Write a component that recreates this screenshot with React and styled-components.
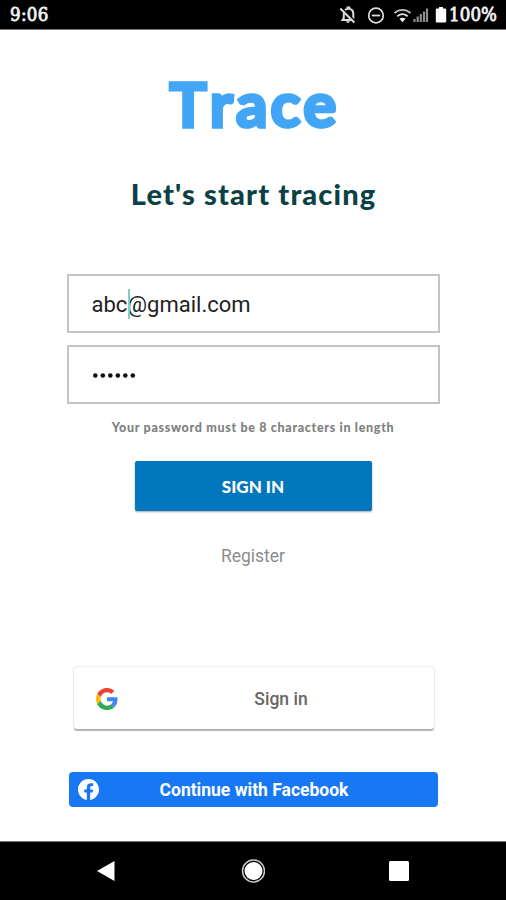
import React, { useState } from 'react';
import styled, { createGlobalStyle } from 'styled-components';

const GlobalStyle = createGlobalStyle`
  * {
    box-sizing: border-box;
  }

  body {
    margin: 0;
    background: #fff;
    font-family: Roboto, sans-serif;
  }
`;

const Screen = styled.div`
  width: 506px;
  height: 900px;
  display: flex;
  flex-direction: column;
  background: #fff;
  overflow: hidden;
`;

const StatusBar = styled.header`
  height: 30px;
  flex-shrink: 0;
  display: flex;
  justify-content: space-between;
  align-items: center;
  padding: 0 9px 0 10px;
  background: #000;
  border-bottom: 1px solid #777;
  color: #f2f2f2;
  font: 18.5px/30px 'DejaVu Serif Condensed', 'DejaVu Serif', serif;
  font-stretch: condensed;
  -webkit-text-stroke: 0.8px #f2f2f2;
`;

const StatusText = styled.span`
  letter-spacing: ${props => props.$spacing || '0'};
`;

const StatusIcons = styled.div`
  display: flex;
  align-items: center;
  height: 30px;

  svg {
    display: block;
  }
`;

const Content = styled.main`
  flex: 1;
  display: flex;
  flex-direction: column;
  align-items: center;
`;

const Logo = styled.h1`
  margin: 35px 0 0;
  color: #42a5f5;
  font: 700 62px/76px Lato, sans-serif;
  font-kerning: none;
  letter-spacing: 3px;
  text-indent: 3px;
  -webkit-text-stroke: 3.5px #42a5f5;
`;

const Tagline = styled.h2`
  margin: 33px 0 0;
  color: #0b4144;
  font: 900 29px/40px Lato, sans-serif;
  letter-spacing: 1.15px;
  text-indent: 1.15px;
`;

const Form = styled.form`
  width: 373px;
  margin-top: 60px;
  display: flex;
  flex-direction: column;
  align-items: center;
`;

const Field = styled.div`
  position: relative;
  width: 100%;
  height: 59px;
  margin-bottom: 12px;
  padding: 2px 24px 0 23px;
  display: flex;
  align-items: center;
  border: 2px solid #c4c4c4;
  color: #222;
  font-size: 22px;
`;

const Caret = styled.span`
  position: absolute;
  left: 59px;
  top: 13px;
  width: 2px;
  height: 30px;
  background: #7fd0c0;
`;

const Dots = styled.svg`
  display: block;
`;

const Hint = styled.p`
  margin: 2px 0 0;
  color: #808080;
  font: 900 12.5px/20px Lato, sans-serif;
  letter-spacing: 0.68px;
  white-space: nowrap;
`;

const SignInButton = styled.button`
  width: 237px;
  height: 50px;
  margin-top: 23px;
  padding: 2px 0 0;
  border: none;
  border-radius: 2px;
  background: #0277bd;
  box-shadow: 0 1px 2px rgba(0, 0, 0, 0.35);
  color: #fff;
  font: 900 17px/48px Lato, sans-serif;
`;

const RegisterLink = styled.a`
  margin-top: 33px;
  color: #8c8c8c;
  font-size: 17.5px;
  line-height: 24px;
`;

const GoogleButton = styled.button`
  width: 360px;
  height: 62px;
  margin: 99px 0 0 2px;
  padding: 2px 0 0 22px;
  display: flex;
  align-items: center;
  border: none;
  border-radius: 3px;
  background: #fff;
  box-shadow: 0 2px 1px rgba(0, 0, 0, 0.28), 0 0 2px rgba(0, 0, 0, 0.22);
  color: #666;
  font: 500 17.5px/24px Roboto, sans-serif;
`;

const GoogleLabel = styled.span`
  flex: 1;
  padding-left: 10px;
  text-align: center;
`;

const FacebookButton = styled.button`
  width: 369px;
  height: 35px;
  margin-top: 43px;
  padding: 0 10px 0 9px;
  display: flex;
  align-items: center;
  border: none;
  border-radius: 4px;
  background: #1877f2;
  color: #fff;
  font: bold 17.5px/24px Roboto, sans-serif;
`;

const FacebookLabel = styled.span`
  flex: 1;
  padding: 1px 18px 0 0;
  text-align: center;
`;

const NavBar = styled.nav`
  height: 59px;
  flex-shrink: 0;
  display: flex;
  justify-content: space-between;
  align-items: center;
  padding: 0 96px 0 95px;
  background: #000;
  border-top: 1px solid #777;
`;

const StatusGlyphs = () => (
  <svg width="111" height="30" viewBox="0 0 111 30" fill="none">
    {/* muted bell */}
    <path d="M4.5 20h10.8V14c0-3-1.8-5-4-5.3V7.5h-1.8v1.2c-2.2.4-3.7 2.4-3.7 5.3v4z" stroke="#ddd" strokeWidth="2" />
    <path d="M8.2 21.3h3.6a1.8 1.8 0 0 1-3.6 0z" fill="#ddd" />
    <path d="M3.5 8.500l14 14" stroke="#000" strokeWidth="3" />
    <path d="M2.3 8.500l14 14" stroke="#ddd" strokeWidth="2" />
    {/* do not disturb */}
    <circle cx="38" cy="15.5" r="7.3" stroke="#ddd" strokeWidth="1.7" />
    <path d="M33.8 15.500h8.400" stroke="#ddd" strokeWidth="1.8" />
    {/* wifi */}
    <path d="M56.5 13c4.700-4.200 11.300-4.200 16 0" stroke="#bbb" strokeWidth="1.8" />
    <path d="M59.3 16.200c3.200-2.600 7.200-2.600 10.400 0" stroke="#ddd" strokeWidth="1.8" />
    <path d="M61.5 18.800c2-1.300 4-1.300 6 0l-3 3.400z" fill="#eee" />
    {/* signal */}
    <path d="M76.5 22v-3M79.7 22v-5.500M82.8 22v-8M86 22v-10.500M89 22V8.500" stroke="#8d8d8d" strokeWidth="2.2" />
    {/* battery */}
    <path d="M101 7h4v1.600h2.200q1 0 1 1v12q0 1-1 1h-8.400q-1 0-1-1v-12q0-1 1-1h2.200z" fill="#fff" />
  </svg>
);

const GoogleIcon = () => (
  <svg width="22" height="22" viewBox="0 0 48 48">
    <path fill="#EA4335" d="M24 9.500c3.540 0 6.710 1.220 9.210 3.600l6.850-6.850C35.900 2.380 30.470 0 24 0 14.620 0 6.510 5.380 2.560 13.220l7.980 6.190C12.430 13.720 17.740 9.500 24 9.500z" />
    <path fill="#4285F4" d="M46.980 24.550c0-1.570-.15-3.090-.38-4.550H24v9.020h12.940c-.58 2.960-2.260 5.480-4.780 7.180l7.730 6c4.510-4.180 7.090-10.360 7.090-17.650z" />
    <path fill="#FBBC05" d="M10.530 28.590c-.48-1.450-.76-2.990-.76-4.590s.27-3.140.76-4.590l-7.980-6.190C.92 16.460 0 20.120 0 24c0 3.880.92 7.540 2.560 10.780l7.970-6.190z" />
    <path fill="#34A853" d="M24 48c6.480 0 11.930-2.130 15.890-5.810l-7.730-6c-2.150 1.450-4.920 2.300-8.160 2.300-6.260 0-11.570-4.220-13.470-9.910l-7.980 6.190C6.510 42.620 14.620 48 24 48z" />
  </svg>
);

const FacebookIcon = () => (
  <svg width="21" height="21" viewBox="0 0 24 24">
    <path fill="#fff" d="M24 12.073c0-6.627-5.373-12-12-12s-12 5.373-12 12c0 5.990 4.388 10.954 10.125 11.854v-8.385H7.078v-3.470h3.047V9.430c0-3.007 1.792-4.669 4.533-4.669 1.312 0 2.686.235 2.686.235v2.953H15.830c-1.491 0-1.956.925-1.956 1.874v2.250h3.328l-.532 3.470h-2.796v8.385C19.612 23.027 24 18.062 24 12.073z" />
  </svg>
);

const App = () => {
  const [email] = useState('abc@gmail.com');
  const [passwordLength] = useState(6);

  return (
    <>
      <GlobalStyle />
      <Screen>
        <StatusBar>
          <StatusText $spacing="0.3px">9:06</StatusText>
          <StatusIcons>
            <StatusGlyphs />
            <StatusText $spacing="0.1px">100%</StatusText>
          </StatusIcons>
        </StatusBar>

        <Content>
          <Logo>Trace</Logo>
          <Tagline>Let's start tracing</Tagline>

          <Form onSubmit={(e) => e.preventDefault()}>
            <Field>
              {email}
              <Caret />
            </Field>
            <Field>
              <Dots width="46" height="8" viewBox="0 0 46 8">
                {Array.from({ length: passwordLength }, (_, index) => (
                  <circle key={index} cx={3.3 + index * 7.5} cy="3.5" r="2.3" fill="#111" />
                ))}
              </Dots>
            </Field>
            <Hint>Your password must be 8 characters in length</Hint>
            <SignInButton type="submit">SIGN IN</SignInButton>
            <RegisterLink>Register</RegisterLink>
          </Form>

          <GoogleButton>
            <GoogleIcon />
            <GoogleLabel>Sign in</GoogleLabel>
          </GoogleButton>

          <FacebookButton>
            <FacebookIcon />
            <FacebookLabel>Continue with Facebook</FacebookLabel>
          </FacebookButton>
        </Content>

        <NavBar>
          <svg width="21" height="24" viewBox="0 0 21 24">
            <path d="M2 12L19.500 2v20z" fill="#fff" />
          </svg>
          <svg width="26" height="26" viewBox="-1.500 0 26 26">
            <circle cx="13" cy="13" r="11" fill="none" stroke="#ccc" strokeWidth="1.5" />
            <circle cx="13" cy="13" r="9" fill="#fff" />
          </svg>
          <svg width="22" height="22" viewBox="0 0 22 22">
            <rect x="1" y="1" width="20" height="20" rx="1.5" fill="#fff" />
          </svg>
        </NavBar>
      </Screen>
    </>
  );
};

export default App;
